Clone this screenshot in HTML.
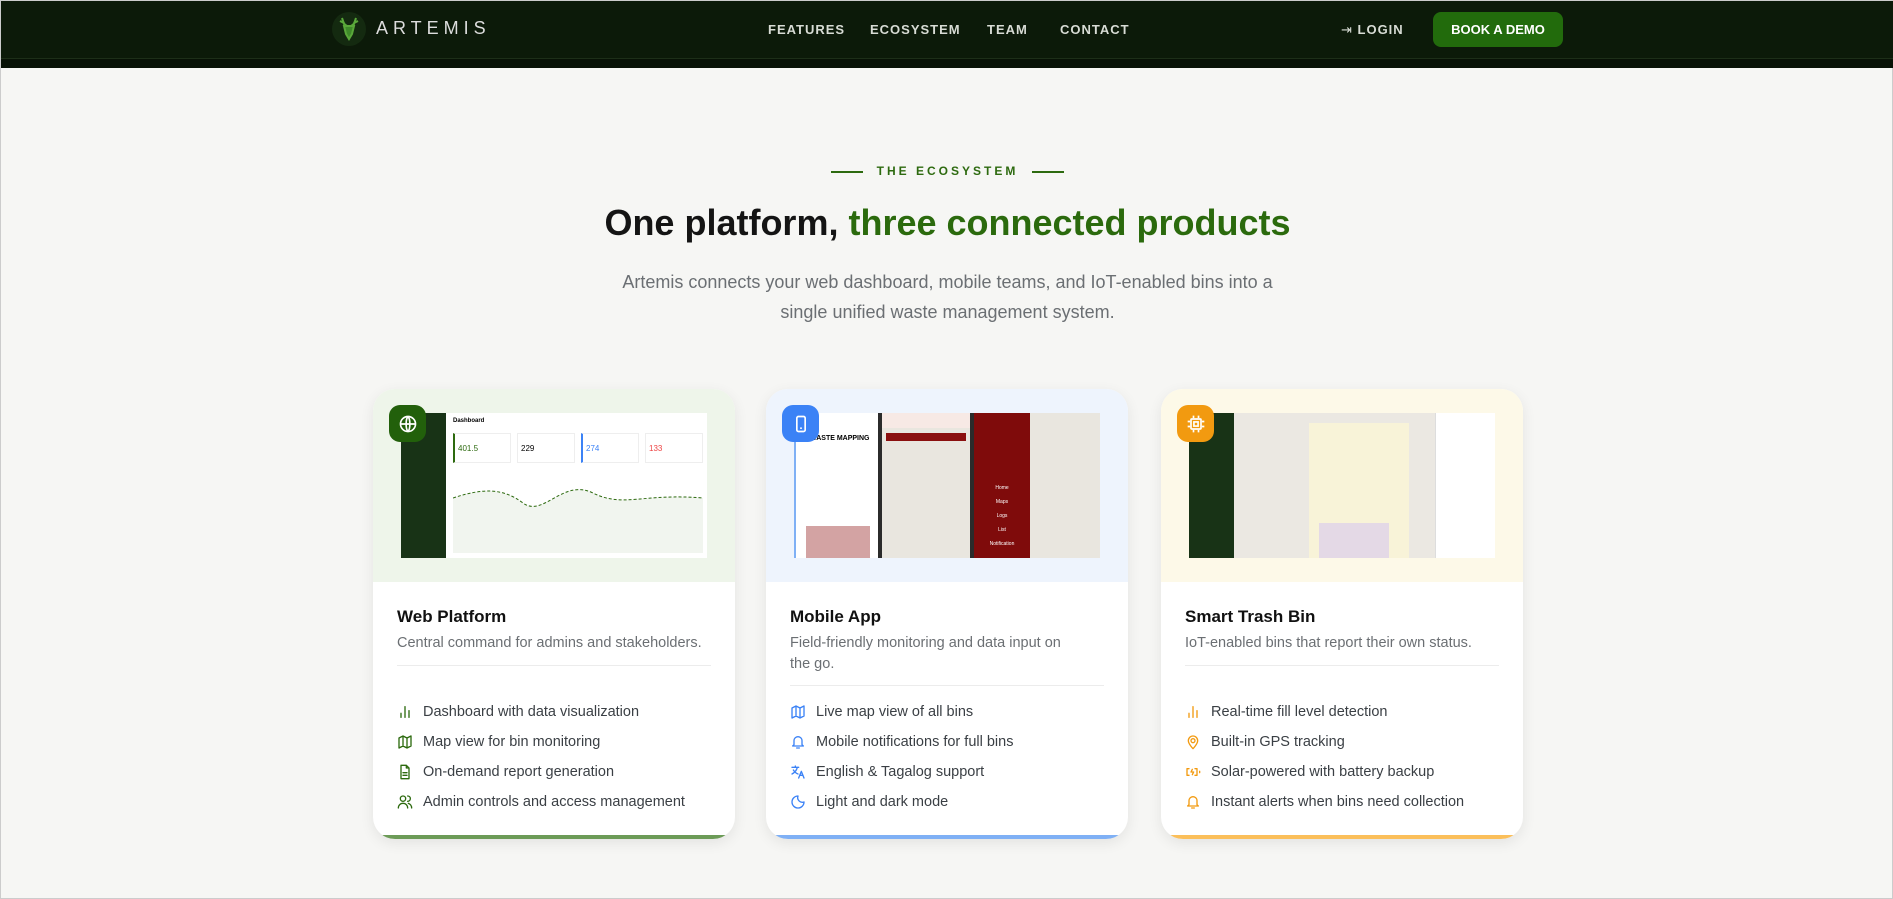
<!DOCTYPE html>
<html><head><meta charset="utf-8"><style>
*{box-sizing:border-box;margin:0;padding:0}
body{width:1893px;height:899px;overflow:hidden;background:#f6f6f4;font-family:"Liberation Sans",sans-serif;position:relative;border:1px solid #ccc}
.nav{position:absolute;left:0;top:0;width:1893px;height:58px;background:#0c1a09;border-bottom:1px solid #1d2e18}
.nav2{position:absolute;left:0;top:58px;width:1893px;height:9px;background:#081206}
.logo{position:absolute;left:331px;top:11px;width:34px;height:34px;border-radius:50%;background:#142a10}
.brand{position:absolute;left:375px;top:17px;color:#ddd;font-size:18px;letter-spacing:5px}
.links a{position:absolute;top:21px;color:#d8dcd5;font-size:13px;font-weight:bold;letter-spacing:1px;text-decoration:none}
.btn{position:absolute;left:1432px;top:11px;width:130px;height:35px;border-radius:8px;background:#226b0c;color:#fff;font-size:13px;font-weight:bold;text-align:center;line-height:35px}
.eyebrow{position:absolute;top:163px;left:0;width:1893px;text-align:center;color:#2d6a0f;font-size:12px;font-weight:bold;letter-spacing:3px}
.eyebrow span{display:inline-block;width:32px;height:2px;background:#2d6a0f;vertical-align:middle;margin:0 14px}
h1{position:absolute;top:201px;left:0;width:1893px;text-align:center;font-size:36px;color:#141414}
h1 em{font-style:normal;color:#2b6a0d}
.sub{position:absolute;top:266px;left:0;width:1893px;text-align:center;font-size:18px;line-height:30px;color:#6b6f73}
.card{position:absolute;top:388px;width:362px;height:450px;border-radius:22px;background:#fff;box-shadow:0 4px 14px rgba(0,0,0,.08);overflow:hidden}
.top{position:absolute;left:0;top:0;width:100%;height:193px}
.shot{position:absolute;left:28px;top:24px;width:306px;height:145px;background:#fff;overflow:hidden}
.badge{position:absolute;left:16px;top:16px;width:37px;height:37px;border-radius:11px;display:flex;align-items:center;justify-content:center}
.t{position:absolute;left:24px;top:218px;font-size:17px;font-weight:bold;color:#111}
.d{position:absolute;left:24px;top:244px;width:314px;font-size:14.5px;line-height:21px;color:#6b6f73}
.hr{position:absolute;left:24px;right:24px;height:1px;background:#ececec}
ul{position:absolute;left:24px;list-style:none}
li{height:30px;font-size:14.5px;color:#3a3f44;display:flex;align-items:center}
li svg{width:16px;height:16px;margin-right:10px;fill:none;stroke-width:2;stroke-linecap:round;stroke-linejoin:round}
.bar{position:absolute;left:0;bottom:0;width:100%;height:4px}
</style></head><body>
<div class="nav"></div><div class="nav2"></div>
<div class="logo"><svg width="34" height="34" viewBox="0 0 34 34"><path d="M10 6l2 6 3 2M24 6l-2 6-3 2M8 9l4 2M26 9l-4 2M12 14h10l-2 8-3 5-3-5z" stroke="#5aa83a" stroke-width="2" fill="#3f8a2a"/></svg></div>
<div class="brand">ARTEMIS</div>
<div class="links"><a style="left:767px">FEATURES</a><a style="left:869px">ECOSYSTEM</a><a style="left:986px">TEAM</a><a style="left:1059px">CONTACT</a>
<a style="left:1340px"><span style="font-weight:normal">⇥</span> LOGIN</a></div>
<div class="btn">BOOK A DEMO</div>
<div class="eyebrow"><span></span>THE ECOSYSTEM<span></span></div>
<h1>One platform, <em>three connected products</em></h1>
<div class="sub">Artemis connects your web dashboard, mobile teams, and IoT-enabled bins into a<br>single unified waste management system.</div>

<div class="card" style="left:372px">
<div class="top" style="background:#eef5ea">
<div class="shot"><div style="position:absolute;left:0;top:0;width:45px;height:145px;background:#183316"></div>
<div style="position:absolute;left:52px;top:5px;font-size:6px;font-weight:bold">Dashboard</div>
<div style="position:absolute;left:52px;top:20px;width:58px;height:30px;border:1px solid #eee;border-left:2px solid #2d6a0f;font-size:8px;color:#2d6a0f;padding:10px 3px">401.5</div>
<div style="position:absolute;left:116px;top:20px;width:58px;height:30px;border:1px solid #eee;font-size:8px;padding:10px 3px">229</div>
<div style="position:absolute;left:180px;top:20px;width:58px;height:30px;border:1px solid #eee;border-left:2px solid #3b82f6;font-size:8px;color:#3b82f6;padding:10px 3px">274</div>
<div style="position:absolute;left:244px;top:20px;width:58px;height:30px;border:1px solid #eee;font-size:8px;color:#e44;padding:10px 3px">133</div>
<svg style="position:absolute;left:52px;top:55px" width="250" height="85"><path d="M0 30 C30 20 50 20 70 35 S110 10 140 25 S190 25 250 30 L250 85 L0 85Z" fill="#f1f5ef"/><path d="M0 30 C30 20 50 20 70 35 S110 10 140 25 S190 25 250 30" stroke="#2d6a0f" stroke-dasharray="3 2" fill="none"/></svg></div>
<div class="badge" style="background:#22600b"><svg width="20" height="20" viewBox="0 0 24 24" fill="none" stroke="#fff" stroke-width="2"><circle cx="12" cy="12" r="9"/><path d="M3 12h18M12 3c3 3 3 15 0 18M12 3c-3 3-3 15 0 18"/></svg></div></div>
<div class="t">Web Platform</div><div class="d">Central command for admins and stakeholders.</div>
<div class="hr" style="top:276px"></div>
<ul style="top:308px">
<li><svg viewBox="0 0 24 24" stroke="#2d6a0f"><path d="M6 20v-6M12 20V4M18 20v-10"/></svg>Dashboard with data visualization</li>
<li><svg viewBox="0 0 24 24" stroke="#2d6a0f"><path d="M3 6l6-3 6 3 6-3v15l-6 3-6-3-6 3zM9 3v15M15 6v15"/></svg>Map view for bin monitoring</li>
<li><svg viewBox="0 0 24 24" stroke="#2d6a0f"><path d="M14 2H6v20h12V6zM14 2v4h4M9 13h6M9 17h6"/></svg>On-demand report generation</li>
<li><svg viewBox="0 0 24 24" stroke="#2d6a0f"><circle cx="9" cy="7" r="4"/><path d="M2 21c0-4 3-7 7-7s7 3 7 7M16 3a4 4 0 010 8M22 21c0-3-2-6-5-7"/></svg>Admin controls and access management</li></ul>
<div class="bar" style="background:#6c9b57"></div></div>

<div class="card" style="left:765px">
<div class="top" style="background:#eef4fd">
<div class="shot" style="background:#f3f3f3">
<div style="position:absolute;left:0;top:0;width:84px;height:145px;background:#fff;border-left:2px solid #7fb0f5"><div style="font-size:7px;font-weight:bold;margin:22px 0 0 14px">WASTE MAPPING</div><div style="position:absolute;left:10px;top:113px;width:64px;height:32px;background:#d3a3a3"></div></div>
<div style="position:absolute;left:84px;top:0;width:4px;height:145px;background:#2b2b2b"></div>
<div style="position:absolute;left:88px;top:0;width:88px;height:145px;background:#e9e6df"><div style="height:15px;background:#f7e9e5"></div><div style="margin:5px 4px;height:8px;background:#8a0f0f"></div></div>
<div style="position:absolute;left:176px;top:0;width:4px;height:145px;background:#2b2b2b"></div>
<div style="position:absolute;left:180px;top:0;width:56px;height:145px;background:#7f0b0b;font-size:5px;color:#fff;text-align:center;padding-top:68px;line-height:14px">Home<br>Maps<br>Logs<br>List<br>Notification</div>
<div style="position:absolute;left:236px;top:0;width:70px;height:145px;background:#e9e6df"></div></div>
<div class="badge" style="background:#3b82f6"><svg width="20" height="20" viewBox="0 0 24 24" fill="none" stroke="#fff" stroke-width="2"><rect x="7" y="3" width="10" height="18" rx="2"/><path d="M11 17h2"/></svg></div></div>
<div class="t">Mobile App</div><div class="d" style="width:290px">Field-friendly monitoring and data input on the go.</div>
<div class="hr" style="top:296px"></div>
<ul style="top:308px">
<li><svg viewBox="0 0 24 24" stroke="#3b82f6"><path d="M3 6l6-3 6 3 6-3v15l-6 3-6-3-6 3zM9 3v15M15 6v15"/></svg>Live map view of all bins</li>
<li><svg viewBox="0 0 24 24" stroke="#3b82f6"><path d="M6 16V10a6 6 0 0112 0v6l2 2H4zM10 21h4"/></svg>Mobile notifications for full bins</li>
<li><svg viewBox="0 0 24 24" stroke="#3b82f6"><path d="M3 5h10M8 3v2M5 9c2 3 4 5 7 6M11 5c-1 4-4 8-8 10M13 21l4-10 4 10M14.5 17h5"/></svg>English &amp; Tagalog support</li>
<li><svg viewBox="0 0 24 24" stroke="#3b82f6"><path d="M12 3a7 7 0 009 9 9 9 0 11-9-9z"/></svg>Light and dark mode</li></ul>
<div class="bar" style="background:#7fb0f5"></div></div>

<div class="card" style="left:1160px">
<div class="top" style="background:#fdf9e8">
<div class="shot" style="background:#ebe8e2">
<div style="position:absolute;left:0;top:0;width:45px;height:145px;background:#183316"></div>
<div style="position:absolute;left:120px;top:10px;width:100px;height:135px;background:#f8f3d8"></div>
<div style="position:absolute;left:130px;top:110px;width:70px;height:35px;background:#e4d9e6"></div>
<div style="position:absolute;left:246px;top:0;width:60px;height:145px;background:#fff;border-left:1px solid #ddd"></div></div>
<div class="badge" style="background:#f29a10"><svg width="20" height="20" viewBox="0 0 24 24" fill="none" stroke="#fff" stroke-width="2"><rect x="6" y="6" width="12" height="12" rx="1"/><rect x="9.5" y="9.5" width="5" height="5"/><path d="M9 2v3M15 2v3M9 19v3M15 19v3M2 9h3M2 15h3M19 9h3M19 15h3"/></svg></div></div>
<div class="t">Smart Trash Bin</div><div class="d">IoT-enabled bins that report their own status.</div>
<div class="hr" style="top:276px"></div>
<ul style="top:308px">
<li><svg viewBox="0 0 24 24" stroke="#f29a10"><path d="M6 20v-6M12 20V4M18 20v-10"/></svg>Real-time fill level detection</li>
<li><svg viewBox="0 0 24 24" stroke="#f29a10"><path d="M12 22s7-7 7-12a7 7 0 00-14 0c0 5 7 12 7 12z"/><circle cx="12" cy="10" r="3"/></svg>Built-in GPS tracking</li>
<li><svg viewBox="0 0 24 24" stroke="#f29a10"><path d="M6 7H3v10h3M15 7h3v10h-3M22 11v2M11 8l-2 4h4l-2 4"/></svg>Solar-powered with battery backup</li>
<li><svg viewBox="0 0 24 24" stroke="#f29a10"><path d="M6 16V10a6 6 0 0112 0v6l2 2H4zM10 21h4"/></svg>Instant alerts when bins need collection</li></ul>
<div class="bar" style="background:#fbbf5a"></div></div>
</body></html>
